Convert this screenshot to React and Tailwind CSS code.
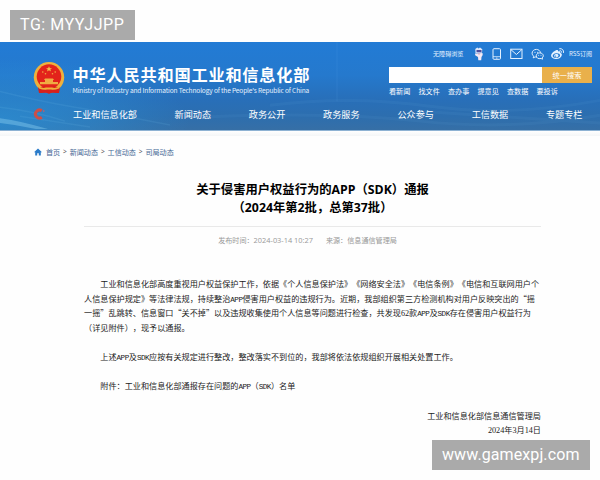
import React from 'react';

const nav = ['工业和信息化部', '新闻动态', '政务公开', '政务服务', '公众参与', '工信数据', '专题专栏'];
const hot = ['看新闻', '找文件', '查办事', '提意见', '查数据', '要投诉'];
const crumbs = ['首页', '新闻动态', '工信动态', '司局动态'];

// Half-width Latin letters inside the article text
function H({ children }) {
  return <span className="font-['Liberation_Mono'] text-[7.600px] leading-[0] tracking-[-0.500px]">{children}</span>;
}

// Half-width digits inside the article text
function D({ children }) {
  return <span className="font-['Liberation_Serif'] text-[8.200px] leading-[0]">{children}</span>;
}

function Emblem() {
  return (
    <svg className="h-[32px] w-[32px] shrink-0" viewBox="0 0 32 32">
      <path d="M6 24 L26 24 L26 31 L19 30.500 L16 31.500 L13 30.500 L6 31 Z" fill="#d8201c" />
      <circle cx="16" cy="15.3" r="15.2" fill="#efb13c" />
      <circle cx="16" cy="14.6" r="12.3" fill="#e3231b" />
      <path d="M16 4.2l.9 2h2.1l-1.7 1.3.7 2.1-2-1.3-2 1.3.7-2.1L13 6.200h2.100z" fill="#f4c04b" />
      <g fill="#f0ac43">
        <circle cx="9.800" cy="10" r=".8" /><circle cx="12.500" cy="11.700" r=".8" />
        <circle cx="19.500" cy="11.700" r=".8" /><circle cx="22.200" cy="10" r=".8" />
        <path d="M12 16.500h8l1 1.500H11zM12 18h8v2h-8zM7 20h18v2.200H7z" />
      </g>
      <path d="M5 25.500l7-1.500 1 2.500h6l1-2.500 7 1.500-1 5.500-6-.5-4 1-4-1-6 .5z" fill="#d8201c" />
      <path d="M4.500 23.500Q9 27 13 25.500h6Q23 27 27.500 23.500L26 26.500Q21 28.500 18 27.500h-4Q11 28.500 6 26.500z" fill="#efb13c" />
    </svg>
  );
}

function TopIcons() {
  return (
    <svg className="h-[14px] w-[96px] shrink-0" viewBox="0 0 96 14" fill="none" stroke="#e4f1ff" strokeWidth="1">
      <g stroke="none">
        <path d="M3.300 2l2-1.500 1.200 1L8 .6l2.300 1.700-.3 3.500-6.500.2z" fill="#dce6fa" />
        <path d="M4.500 3h5v2.200h-5z" fill="#4e4d9c" />
        <path d="M3 6.500l7.500-.5.200 2-1.200 2-.3 3.300H6.300L6 10 3.200 8.200z" fill="#f5eaf4" />
        <path d="M6 6.500h2l-1 1.600z" fill="#d38ba0" />
      </g>
      <rect x="21" y="1.700" width="7.500" height="10.600" rx="1" />
      <path d="M21 9.700h7.500M24 11.100h1.500" strokeWidth=".8" />
      <rect x="38.700" y="2.200" width="11.300" height="9.300" />
      <path d="M39 2.700l5.400 4.800 5.300-4.800" />
      <path d="M68.600 5.700C68 3.600 66.300 2.400 64.400 2.400c-2.500 0-4.300 1.700-4.300 3.800 0 1.300.7 2.400 1.600 3.100l-.5 1.600 1.900-1c.6.2 1 .2 1.600.2" />
      <path d="M67.800 5.900c2 0 3.500 1.300 3.500 2.900 0 .9-.5 1.600-1.100 2.100l.3 1.300-1.400-.7c-3 .7-4.900-.8-4.900-2.700 0-1.600 1.600-2.900 3.600-2.900z" />
      <g fill="#e4f1ff" stroke="none">
        <circle cx="63" cy="5.300" r=".6" /><circle cx="65.700" cy="5.300" r=".6" />
        <circle cx="66.600" cy="8.200" r=".5" /><circle cx="69" cy="8.200" r=".5" />
        <path fillRule="evenodd" d="M84 3.300c1.300-.8 2.500-.2 2 1.200 1.500-.5 2.900-.1 2.300 1.400 1.300.4 1.800 1.200 1.500 2.400-.5 2.300-2.800 3.700-5.300 3.700-3 0-5.400-1.300-5.400-3.500 0-1.900 2.700-4.300 4.900-5.200zM84.300 6.200c-2.300.2-3.700 1.400-3.600 2.800.1 1.300 1.700 2.100 3.800 1.900 2.200-.2 3.700-1.400 3.600-2.700-.1-1.400-1.700-2.200-3.800-2z" />
        <path fillRule="evenodd" d="M84 7c1.500-.2 2.500.5 2.500 1.500s-1 1.900-2.200 1.900-2.100-.6-2.100-1.600c0-.9.700-1.700 1.800-1.800zM83.600 8.500a.6.600 0 1 0 .1 1.200.6.600 0 0 0-.1-1.200z" />
      </g>
      <path d="M87.300 1.700c2.800-.5 4.700 1.500 4.200 4.200M87.700 3.700c1.300-.2 2.100.7 1.900 1.900" strokeWidth="1" />
    </svg>
  );
}

function Header() {
  return (
    <header className="relative h-[89px] w-[600px] overflow-hidden border-b border-[#8eb2d3] bg-[linear-gradient(180deg,#227bd5_0%,#2579cd_38%,#286fb9_65%,#2d6eae_85%,#366fa6_100%)]">
      <div className="absolute inset-0 bg-[radial-gradient(ellipse_190px_62px_at_0px_78px,#2b94dab0,#2b94da60_50%,transparent)]" />
      <svg className="absolute inset-0 h-full w-full" viewBox="0 0 600 89" preserveAspectRatio="none">
        <path d="M0 50Q40 60 75 66T170 84M0 66Q35 70 65 80M20 75L90 86" fill="none" stroke="#7cc8ef" strokeOpacity=".12" strokeWidth="1.500" />
        <path d="M0 77Q22 80 48 88H36Q18 84 0 82Z" fill="#8fd3f2" fillOpacity=".4" />
        <path d="M270 64Q350 54 430 65T600 59M200 76Q330 70 420 80T600 74M420 70L600 82" fill="none" stroke="#65a2d7" strokeOpacity=".1" strokeWidth="3" />
        <path d="M337 0V60" stroke="#62aaf0" strokeOpacity=".15" />
      </svg>
      <div className="relative flex h-full flex-col text-white">
        <div className="flex h-[60px] items-start justify-between pl-[33px] pr-[8px]">
          <div className="flex pt-[20px]">
            <Emblem />
            <div className="ml-[7.500px] pt-[2px]">
              <div className="h-[21px] whitespace-nowrap text-[16.200px] font-bold leading-[21px] tracking-[0.800px]">中华人民共和国工业和信息化部</div>
              <div className="mt-[1px] w-0 whitespace-nowrap text-[6.600px] leading-[8px] tracking-[-0.165px] text-[#e4f0fc]">Ministry of Industry and Information Technology of the People's Republic of China</div>
            </div>
          </div>
          <div className="w-[203px]">
            <div className="flex h-[25px] items-center pb-[2px] pl-[44px] text-[6.100px] leading-[10px] text-[#e7f2ff]">
              <span className="w-[39px] shrink-0 whitespace-nowrap">无障碍浏览</span>
              <TopIcons />
              <span className="ml-[1px] whitespace-nowrap">RSS订阅</span>
            </div>
            <div className="flex h-[16px]">
              <div className="w-[153px] bg-white" />
              <div className="w-[50px] bg-[#e9b04b] text-center text-[7.200px] leading-[16px]">统一搜索</div>
            </div>
            <div className="flex pt-[4px]">
              {hot.map((h) => (
                <span key={h} className="w-[29.500px] shrink-0 whitespace-nowrap text-[7.100px] leading-[9px]">{h}</span>
              ))}
            </div>
          </div>
        </div>
        <div className="flex h-[23px] items-center pl-[33px] text-[9.150px] leading-[12px]">
          <svg className="mr-[28px] h-[12px] w-[12px] shrink-0" viewBox="0 0 12 12" fill="none">
            <path d="M8.800 2.800A4 4 0 1 0 8.800 9.300" stroke="#cc4f48" strokeWidth="3" />
            <path d="M10 3h1.500" stroke="#b8606c" strokeWidth="1.300" />
          </svg>
          {nav.map((n, i) => (
            <span key={n} className={`shrink-0 whitespace-nowrap ${i === 0 ? 'w-[101.500px]' : 'w-[74.300px]'}`}>{n}</span>
          ))}
        </div>
      </div>
    </header>
  );
}

export default function App() {
  return (
    <div className="relative h-[480px] w-[600px] overflow-hidden bg-[#fefefe] pt-[42px] font-['Noto_Sans_CJK_SC',sans-serif] text-black [text-spacing-trim:space-all]">
      <Header />
      <div className="h-[5px] bg-linear-to-b from-white to-[#f4f6f7]" />
      <nav className="flex h-[31px] items-center pl-[33.500px] text-[7.100px] leading-[10px] text-[#456795]">
        <svg className="mr-[4.500px] h-[8px] w-[8px]" viewBox="0 0 8 8" fill="#2a7bc9">
          <path d="M4 .5L0 4.300h1.200V7.500h2V5.200h1.600v2.300h2V4.300H8z" />
        </svg>
        {crumbs.map((c, i) => (
          <React.Fragment key={c}>
            {i > 0 && <span className="w-[9.500px] text-center font-['Noto_Sans'] text-[6.500px] text-[#555]">&gt;</span>}
            <span>{c}</span>
          </React.Fragment>
        ))}
      </nav>
      <main className="w-[541px] pl-[84px]">
        <h1 className="h-[59px] whitespace-nowrap pt-[13px] text-center text-[12.300px] font-bold leading-[18px]">
          关于侵害用户权益行为的<span className="font-['Open_Sans'] leading-[0]">APP</span>（<span className="font-['Open_Sans'] leading-[0]">SDK</span>）通报
          <br />
          （<span className="font-['Open_Sans'] leading-[0]">2024</span>年第<span className="font-['Open_Sans'] leading-[0]">2</span>批，总第<span className="font-['Open_Sans'] leading-[0]">37</span>批）
        </h1>
        <div className="flex h-[28px] items-center justify-center gap-[13px] whitespace-nowrap border-t border-[#e9e9e9] pr-[10px] text-[7.100px] text-[#999]">
          <span>发布时间：<span className="font-['Open_Sans'] text-[7.400px]">2024-03-14 10:27</span></span>
          <span>来源：信息通信管理局</span>
        </div>
        <article className="whitespace-nowrap pt-[23px] text-[8.130px] leading-[14.650px] text-[#222]">
          <p className="pl-[16.300px]">工业和信息化部高度重视用户权益保护工作，依据《个人信息保护法》《网络安全法》《电信条例》《电信和互联网用户个</p>
          <p>人信息保护规定》等法律法规，持续整治<H>APP</H>侵害用户权益的违规行为。近期，我部组织第三方检测机构对用户反映突出的“摇</p>
          <p>一摇”乱跳转、信息窗口“关不掉”以及违规收集使用个人信息等问题进行检查，共发现<D>62</D>款<H>APP</H>及<H>SDK</H>存在侵害用户权益行为</p>
          <p>（详见附件），现予以通报。</p>
          <p className="pl-[16.300px] pt-[14.600px]">上述<H>APP</H>及<H>SDK</H>应按有关规定进行整改，整改落实不到位的，我部将依法依规组织开展相关处置工作。</p>
          <p className="pl-[16.300px] pt-[14.600px]">附件：工业和信息化部通报存在问题的<H>APP</H>（<H>SDK</H>）名单</p>
          <p className="pt-[14.600px] text-right">工业和信息化部信息通信管理局</p>
          <p className="text-right"><D>2024</D>年<D>3</D>月<D>14</D>日</p>
        </article>
      </main>
      <div className="absolute left-[10px] top-[10px] h-[30px] w-[125px] whitespace-nowrap bg-[#aaaaaa] pl-[10px] font-['Roboto'] text-[16px] leading-[30px] tracking-[0.550px] text-white">TG: MYYJJPP</div>
      <div className="absolute left-[432px] top-[440px] h-[30px] w-[158px] whitespace-nowrap bg-[#aaaaaa] pl-[10px] font-['Roboto'] text-[16px] leading-[29px] tracking-[0.100px] text-white">www.gamexpj.com</div>
    </div>
  );
}
